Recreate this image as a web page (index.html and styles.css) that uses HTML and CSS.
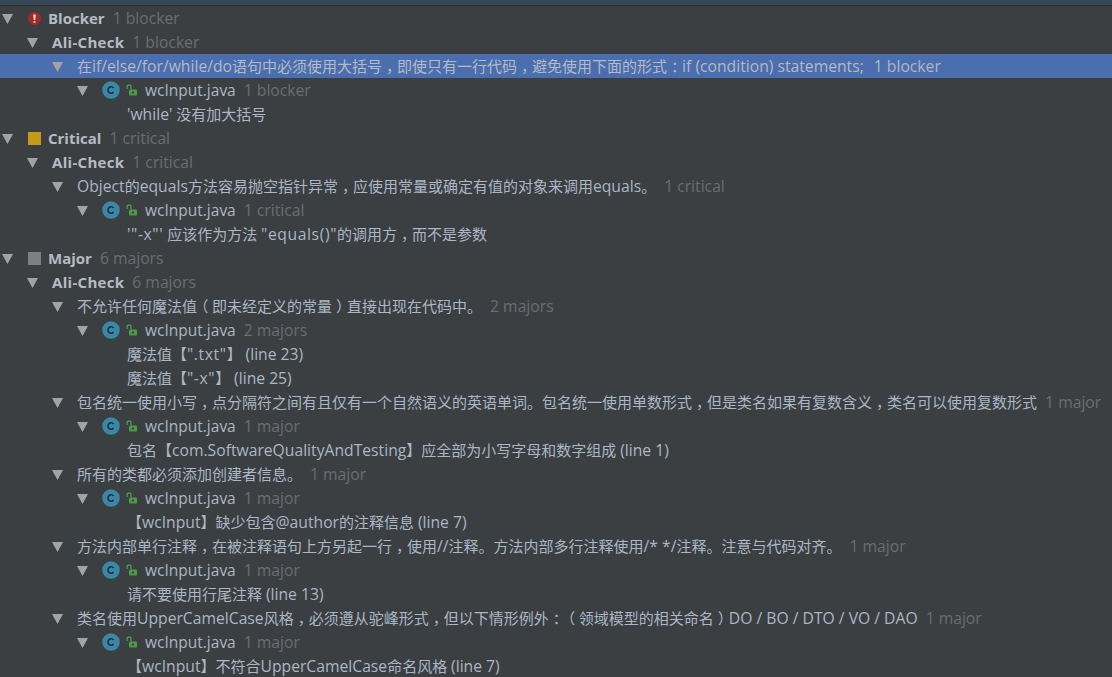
FILE: index.html
```html
<!DOCTYPE html>
<html lang="zh">
<head>
<meta charset="utf-8">
<title>Inspection results</title>
<link rel="stylesheet" href="styles.css">
</head>
<body>
<svg class="defs" width="0" height="0" aria-hidden="true">
  <symbol id="tri" viewBox="0 0 11 10"><path d="M0 0H11L5.5 10Z" fill="#a3a3a3"/></symbol>
  <symbol id="cls" viewBox="0 0 18 18"><circle cx="9" cy="9" r="8.8" fill="#3a87a8"/><path d="M11.6 6.9A3.2 3.2 0 1 0 11.6 11.1" fill="none" stroke="#23303a" stroke-width="1.6"/></symbol>
  <symbol id="lock" viewBox="0 0 11 12"><rect x="3" y="5.5" width="8" height="6" rx="1" fill="#4e9a47"/><path d="M1 5V3A2 2 0 0 1 5 3V5.5" fill="none" stroke="#4e9a47" stroke-width="1.4"/><rect x="6" y="7.5" width="2" height="2" fill="#3c3f41"/></symbol>
</svg>
<main class="tree">
  <div class="row l0"><svg class="tri"><use href="#tri"/></svg><svg class="sev"><circle cx="6.5" cy="6.5" r="6.4" fill="#a32a2a"/><path d="M5.2 2.4H7.8L7.3 8H5.7Z" fill="#ecd6d6"/><rect x="5.6" y="9" width="1.8" height="1.8" fill="#ecd6d6"/></svg><b>Blocker</b><span class="n">1 blocker</span></div>
  <div class="row l1"><svg class="tri"><use href="#tri"/></svg><b>Ali-Check</b><span class="n">1 blocker</span></div>
  <div class="row l2 sel"><svg class="tri"><use href="#tri"/></svg><span>在<i>if/else/for/while/do</i>语句中必须使用大括号<u>，</u>即使只有一行代码<u>，</u>避免使用下面的形式<u>：</u><i>if (condition) statements;</i></span><span class="n">1 blocker</span></div>
  <div class="row l3"><svg class="tri"><use href="#tri"/></svg><svg class="cls"><use href="#cls"/></svg><svg class="lock"><use href="#lock"/></svg><i>wcInput.java</i><span class="n">1 blocker</span></div>
  <div class="row l4"><span><i>'while'</i> 没有加大括号</span></div>

  <div class="row l0"><svg class="tri"><use href="#tri"/></svg><svg class="sev"><rect width="13" height="13" fill="#c39a1a"/></svg><b>Critical</b><span class="n">1 critical</span></div>
  <div class="row l1"><svg class="tri"><use href="#tri"/></svg><b>Ali-Check</b><span class="n">1 critical</span></div>
  <div class="row l2"><svg class="tri"><use href="#tri"/></svg><span><i>Object</i>的<i>equals</i>方法容易抛空指针异常<u>，</u>应使用常量或确定有值的对象来调用<i>equals</i>。</span><span class="n">1 critical</span></div>
  <div class="row l3"><svg class="tri"><use href="#tri"/></svg><svg class="cls"><use href="#cls"/></svg><svg class="lock"><use href="#lock"/></svg><i>wcInput.java</i><span class="n">1 critical</span></div>
  <div class="row l4"><span><i class="q">'"-x"'</i> 应该作为方法 <i class="q">"equals()"</i>的调用方<u>，</u>而不是参数</span></div>

  <div class="row l0"><svg class="tri"><use href="#tri"/></svg><svg class="sev"><rect width="13" height="13" fill="#7f7f7f"/></svg><b>Major</b><span class="n">6 majors</span></div>
  <div class="row l1"><svg class="tri"><use href="#tri"/></svg><b>Ali-Check</b><span class="n">6 majors</span></div>
  <div class="row l2"><svg class="tri"><use href="#tri"/></svg><span>不允许任何魔法值<u>（</u>即未经定义的常量<u>）</u>直接出现在代码中。</span><span class="n">2 majors</span></div>
  <div class="row l3"><svg class="tri"><use href="#tri"/></svg><svg class="cls"><use href="#cls"/></svg><svg class="lock"><use href="#lock"/></svg><i>wcInput.java</i><span class="n">2 majors</span></div>
  <div class="row l4"><span>魔法值【<i class="q">".txt"</i>】 <i>(line 23)</i></span></div>
  <div class="row l4"><span>魔法值【<i class="q">"-x"</i>】 <i>(line 25)</i></span></div>
  <div class="row l2"><svg class="tri"><use href="#tri"/></svg><span>包名统一使用小写<u>，</u>点分隔符之间有且仅有一个自然语义的英语单词。包名统一使用单数形式<u>，</u>但是类名如果有复数含义<u>，</u>类名可以使用复数形式</span><span class="n">1 major</span></div>
  <div class="row l3"><svg class="tri"><use href="#tri"/></svg><svg class="cls"><use href="#cls"/></svg><svg class="lock"><use href="#lock"/></svg><i>wcInput.java</i><span class="n">1 major</span></div>
  <div class="row l4"><span>包名【<i>com.SoftwareQualityAndTesting</i>】应全部为小写字母和数字组成 <i>(line 1)</i></span></div>
  <div class="row l2"><svg class="tri"><use href="#tri"/></svg><span>所有的类都必须添加创建者信息。</span><span class="n">1 major</span></div>
  <div class="row l3"><svg class="tri"><use href="#tri"/></svg><svg class="cls"><use href="#cls"/></svg><svg class="lock"><use href="#lock"/></svg><i>wcInput.java</i><span class="n">1 major</span></div>
  <div class="row l4"><span>【<i>wcInput</i>】缺少包含<i>@author</i>的注释信息 <i>(line 7)</i></span></div>
  <div class="row l2"><svg class="tri"><use href="#tri"/></svg><span>方法内部单行注释<u>，</u>在被注释语句上方另起一行<u>，</u>使用<i>//</i>注释。方法内部多行注释使用<i>/* */</i>注释。注意与代码对齐。</span><span class="n">1 major</span></div>
  <div class="row l3"><svg class="tri"><use href="#tri"/></svg><svg class="cls"><use href="#cls"/></svg><svg class="lock"><use href="#lock"/></svg><i>wcInput.java</i><span class="n">1 major</span></div>
  <div class="row l4"><span>请不要使用行尾注释 <i>(line 13)</i></span></div>
  <div class="row l2"><svg class="tri"><use href="#tri"/></svg><span>类名使用<i>UpperCamelCase</i>风格<u>，</u>必须遵从驼峰形式<u>，</u>但以下情形例外<u>：</u><u>（</u>领域模型的相关命名<u>）</u><i>DO / BO / DTO / VO / DAO</i></span><span class="n">1 major</span></div>
  <div class="row l3"><svg class="tri"><use href="#tri"/></svg><svg class="cls"><use href="#cls"/></svg><svg class="lock"><use href="#lock"/></svg><i>wcInput.java</i><span class="n">1 major</span></div>
  <div class="row l4"><span>【<i>wcInput</i>】不符合<i>UpperCamelCase</i>命名风格 <i>(line 7)</i></span></div>
</main>
</body>
</html>
```
FILE: styles.css
```css
html, body {
  margin: 0;
  height: 100%;
  overflow: hidden;
  background: #3c3f41;
}
body { box-sizing: border-box; border-top: 5px solid #38465a; }
.defs { display: block; height: 0; }
.tree {
  border-top: 1px solid #2b2d2f;
  font-family: "Open Sans", "Noto Sans CJK SC", sans-serif;
  font-size: 15px;
  line-height: 24px;
  color: #a9b7c6;
  text-spacing-trim: space-all;
}
.row {
  display: flex;
  align-items: center;
  height: 24px;
  white-space: nowrap;
}
.row b { font-weight: 700; color: #b4bcc4; }
.row i { font-style: normal; font-size: 15.7px; }
.row > i { font-size: 15.5px; }
.row i.q { letter-spacing: .6px; }
.row u { text-decoration: none; font-feature-settings: "halt"; padding: 0 3.5px 0 4px; }
.row .n { color: #6a6d6f; margin-left: 8px; font-size: 15.7px; }
.l1 b { letter-spacing: .3px; }
.sel { background: #4b6eaf; color: #b4bac6; }
.sel .n { color: #b0b6c2; margin-left: 10px; }
.tri { width: 11px; height: 10px; flex: none; margin: 1px 14px 0 0; }
.sev { width: 13px; height: 13px; flex: none; margin: 0 7px 0 1px; }
.cls { width: 18px; height: 18px; flex: none; margin-right: 6px; }
.lock { width: 11px; height: 12px; flex: none; margin-right: 8px; }
.l0 { padding-left: 2px; }
.l1 { padding-left: 27px; }
.l2 { padding-left: 52px; }
.l3 { padding-left: 77px; }
.l4 { padding-left: 127px; }
```
